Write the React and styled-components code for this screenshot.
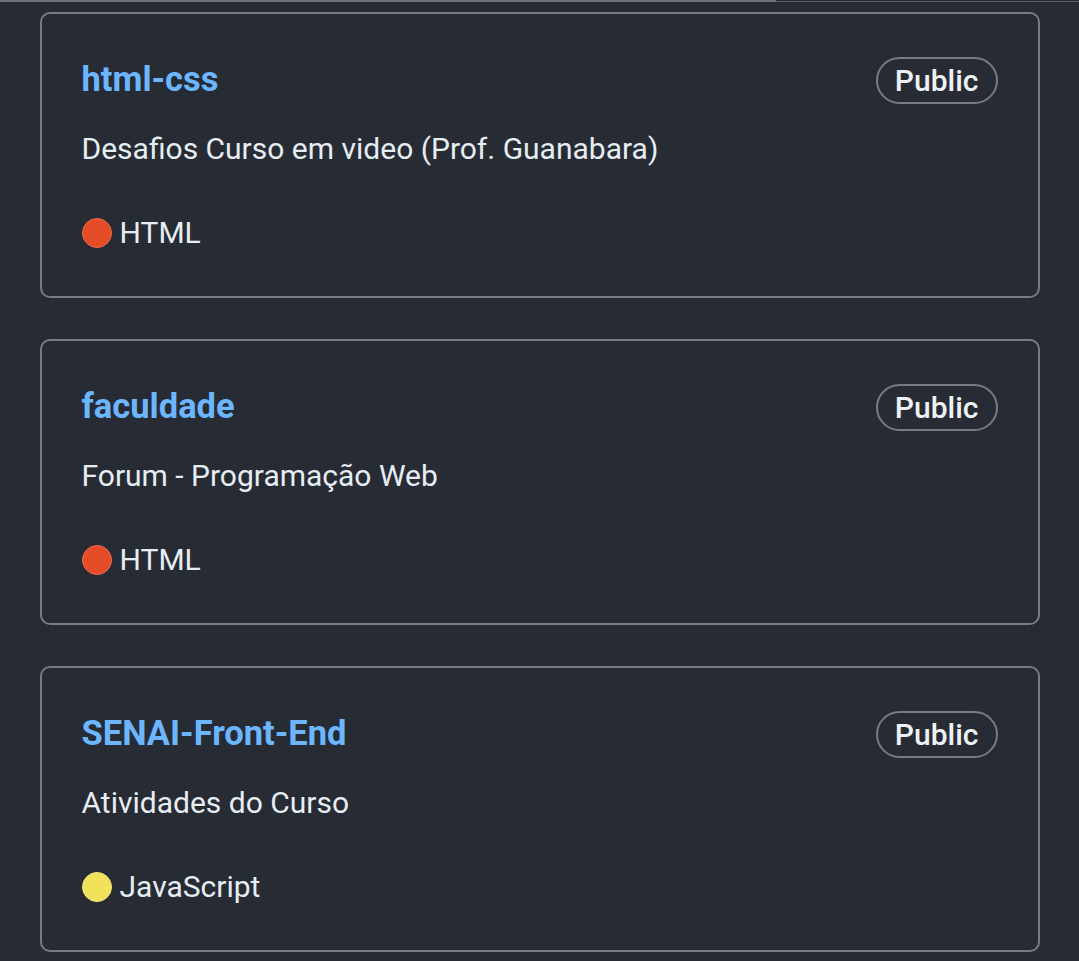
import React from "react";
import styled, { createGlobalStyle } from "styled-components";

const Global = createGlobalStyle`
  html, body { margin: 0; padding: 0; background: #272b34; }
  body { font-family: Roboto, "Noto Sans", "Liberation Sans", sans-serif; color: #e6edf3; }
`;

const TopRule = styled.div`
  display: flex;
  height: 3px;
  align-items: flex-start;
`;
const RuleDark = styled.div`
  width: 776px;
  height: 2px;
  background: #6c717b;
`;
const RuleLight = styled.div`
  flex: 1;
  height: 1px;
  margin-top: 1px;
  background: #5b606a;
`;

const List = styled.div`
  width: 1000px;
  margin: 9px auto 0;
  display: flex;
  flex-direction: column;
  gap: 41px;
`;

const Card = styled.div`
  box-sizing: border-box;
  height: 286px;
  border: 2px solid #767b86;
  border-radius: 10px;
  padding: 43px 40px 0 40px;
  display: flex;
  flex-direction: column;
`;

const Header = styled.div`
  display: flex;
  align-items: center;
  justify-content: space-between;
  height: 47px;
`;

const Title = styled.a`
  font-size: 34.5px;
  line-height: 40px;
  font-weight: 700;
  color: #6cb6ff;
  text-decoration: none;
  margin-top: -3px;
`;

const Badge = styled.span`
  box-sizing: border-box;
  height: 47px;
  padding: 0 17px;
  border: 2px solid #767b86;
  border-radius: 24px;
  display: flex;
  align-items: center;
  font-size: 30px;
  font-weight: 500;
  color: #eef1f5;
`;

const Desc = styled.p`
  margin: 29px 0 0;
  font-size: 30px;
  line-height: 32px;
  color: #e6edf3;
`;

const Lang = styled.div`
  margin-top: 52px;
  display: flex;
  align-items: center;
  gap: 8px;
  font-size: 30px;
  line-height: 32px;
  color: #e6edf3;
`;

const Dot = styled.span`
  box-sizing: border-box;
  width: 30px;
  height: 30px;
  border-radius: 50%;
  background: ${(p) => p.$color};
  border: 1.5px solid ${(p) => p.$ring};
`;

const repos = [
  { name: "html-css", desc: "Desafios Curso em video (Prof. Guanabara)", lang: "HTML", color: "#e34c26", ring: "#f06d4a" },
  { name: "faculdade", desc: "Forum - Programação Web", lang: "HTML", color: "#e34c26", ring: "#f06d4a" },
  { name: "SENAI-Front-End", desc: "Atividades do Curso", lang: "JavaScript", color: "#f1e05a", ring: "#f4e57a" },
];

export default function App() {
  return (
    <>
      <Global />
      <TopRule>
        <RuleDark />
        <RuleLight />
      </TopRule>
      <List>
        {repos.map((r) => (
          <Card key={r.name}>
            <Header>
              <Title href="#">{r.name}</Title>
              <Badge>Public</Badge>
            </Header>
            <Desc>{r.desc}</Desc>
            <Lang>
              <Dot $color={r.color} $ring={r.ring} />
              {r.lang}
            </Lang>
          </Card>
        ))}
      </List>
    </>
  );
}
